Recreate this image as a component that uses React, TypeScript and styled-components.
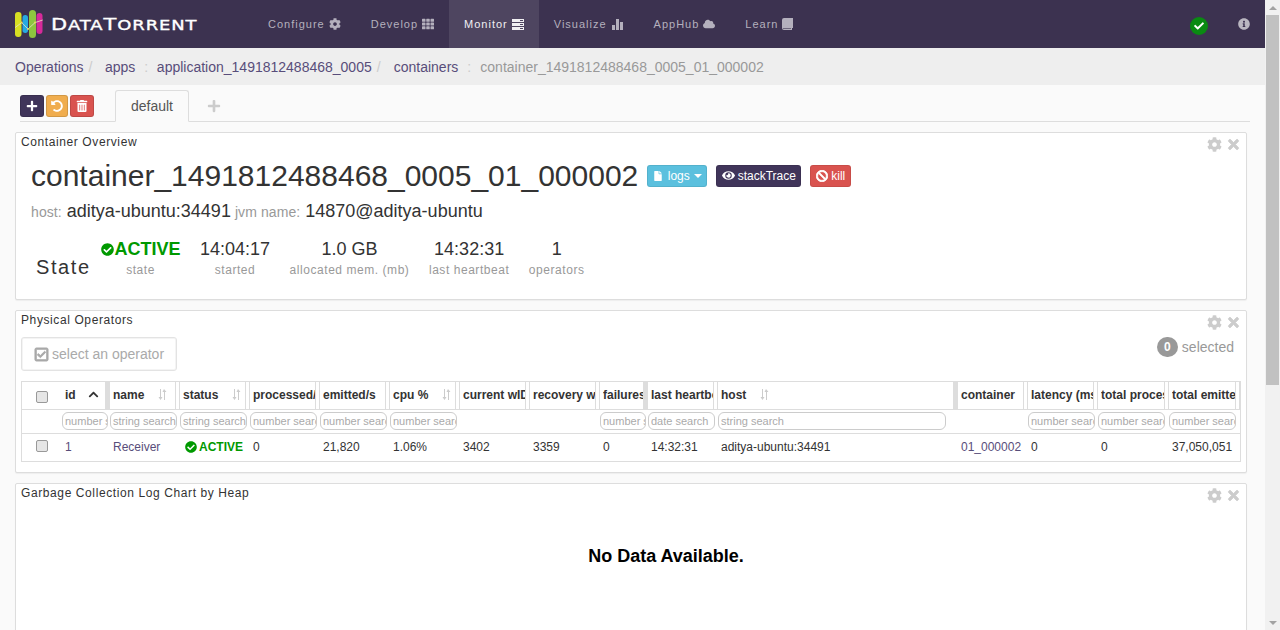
import React from "react";
import styled, { createGlobalStyle } from "styled-components";
import {
  FaCog, FaTh, FaCloud, FaInfoCircle, FaCheckCircle, FaPlus, FaUndoAlt, FaTrashAlt, FaFile,
  FaEye, FaBan, FaTimes, FaCheck, FaChevronUp, FaRegCheckSquare,
} from "react-icons/fa";

const Global = createGlobalStyle`
  html, body { margin: 0; padding: 0; height: 630px; overflow: hidden; background: #fafafa; }
  body { font-family: "Liberation Sans", Arial, sans-serif; font-size: 14px; color: #333; }
  * { box-sizing: border-box; }
`;

const Shell = styled.div`display: flex; width: 1280px; height: 630px; overflow: hidden;`;
const Main = styled.div`width: 1265px; height: 630px; overflow: hidden; flex: none;`;

const ScrollTrack = styled.div`
  width: 15px; height: 630px; background: #f1f1f1; flex: none; display: flex; flex-direction: column; align-items: center;
`;
const ScrollArrow = styled.div<{ $down?: boolean }>`
  height: 15px; flex: none; width: 100%; display: flex; align-items: center; justify-content: center;
  &::after {
    content: ""; width: 0; height: 0; border-left: 4px solid transparent; border-right: 4px solid transparent;
    ${(p) => (p.$down ? "border-top: 4px solid #a3a3a3;" : "border-bottom: 4px solid #a3a3a3;")}
  }
`;
const ScrollThumb = styled.div`width: 13px; height: 370px; background: #c1c1c1; flex: none;`;
const ScrollGap = styled.div`flex: 1;`;

const Nav = styled.nav`height: 48px; background: #3c3250; display: flex; align-items: stretch;`;
const Brand = styled.div`width: 253px; flex: none; display: flex; align-items: center; padding-left: 15px; gap: 8px;`;
const BrandText = styled.span`
  display: inline-block; font-family: "DejaVu Sans", "Liberation Sans", sans-serif; font-weight: 400; font-size: 13.7px; color: #fff;
  letter-spacing: 0.7px; white-space: nowrap; -webkit-text-stroke: .35px #fff; transform: scaleX(1.31); transform-origin: left center; margin-top: 1px;
`;
const BrandCap = styled.span`font-size: 16px;`;
const NavItem = styled.a<{ $active?: boolean }>`
  display: flex; align-items: center; gap: 4px; padding: 0 15px; font-size: 11px; letter-spacing: 1px;
  color: ${(p) => (p.$active ? "#f0eff2" : "#b4b0bd")};
  background: ${(p) => (p.$active ? "#4e4560" : "transparent")};
  white-space: nowrap;
`;
const NavRight = styled.div`margin-left: auto; display: flex; align-items: center; padding-right: 15.5px; gap: 29.5px;`;
const StatusDot = styled.span`
  width: 18px; height: 18px; border-radius: 50%; background: #0a8a12; color: #fff; display: flex; align-items: center; justify-content: center; margin-top: 3px;
`;
const InfoIcon = styled(FaInfoCircle)`color: #b9b6c0; font-size: 12px; margin-top: -1px;`;
const BarsSvg = styled.svg`margin: 0 1px;`;

const Breadcrumbs = styled.div`height: 37px; background: #eee; display: flex; align-items: center; padding-left: 15px; white-space: nowrap;`;
const Crumb = styled.a`color: #584d7a;`;
const CrumbCurrent = styled.span`color: #999;`;
const Sep = styled.span<{ $w: number; $pad: number }>`color: #ccc; width: ${(p) => p.$w}px; padding-left: ${(p) => p.$pad}px; flex: none;`;

const TabBar = styled.div`height: 32px; margin: 5px 15px 0 20px; display: flex; border-bottom: 1px solid #ddd;`;
const Tools = styled.div`display: flex; gap: 2px; width: 95px; padding-top: 5px; flex: none;`;
const ToolButton = styled.button<{ $bg: string; $w: number }>`
  width: ${(p) => p.$w}px; height: 22px; border: 1px solid rgba(0,0,0,.12); border-radius: 3px; background: ${(p) => p.$bg}; color: #fff;
  padding: 0; display: flex; align-items: center; justify-content: center; font-size: 12px;
`;
const Tab = styled.div`
  width: 74px; height: 32px; background: #fafafa; border: 1px solid #ddd; border-bottom: 1px solid #fafafa; border-radius: 3px 3px 0 0; color: #555;
  display: flex; align-items: center; justify-content: center; flex: none;
`;
const AddTab = styled.div`color: #ccc; font-size: 14px; display: flex; align-items: center; padding-left: 18px; height: 31px;`;

const Panels = styled.div`margin: 10px 18px 0 15px; display: flex; flex-direction: column; gap: 10px;`;
const Panel = styled.section<{ $h: number }>`
  height: ${(p) => p.$h}px; flex: none; background: #fff; border: 1px solid #ddd; border-radius: 2px; box-shadow: 0 1px 1px rgba(0,0,0,.05); padding: 0 5px; position: relative;
`;
const PanelTitle = styled.h3`margin: 0; padding-top: 2px; font-size: 12px; font-weight: 400; letter-spacing: .6px; line-height: 14px; color: #333;`;
const PanelTools = styled.div`position: absolute; right: 5px; top: 4px; display: flex; gap: 4px; color: #ccc; font-size: 15px; align-items: center;`;
const CloseIcon = styled(FaTimes)`font-size: 15px; stroke: currentColor; stroke-width: 25;`;

const Heading = styled.div`display: flex; align-items: center; margin: 7px 0 0 10px; height: 40px;`;
const H1 = styled.h1`margin: 0 9px 0 0; font-size: 30px; font-weight: 400; color: #333; line-height: 40px;`;
const Label = styled.button<{ $bg: string; $w: number }>`
  width: ${(p) => p.$w}px; height: 22px; margin-right: 9px; border: 1px solid rgba(0,0,0,.08); border-radius: 3px; background: ${(p) => p.$bg}; color: #fff;
  display: flex; align-items: center; justify-content: center; gap: 3px; padding: 0; font: 12px "Liberation Sans", sans-serif; white-space: nowrap;
`;
const LogsIcon = styled(FaFile)`font-size: 10px; margin-right: 2px;`;
const EyeIcon = styled(FaEye)`font-size: 13px; margin-top: -2px;`;
const BanIcon = styled(FaBan)`font-size: 12px; stroke: currentColor; stroke-width: 30;`;
const Caret = styled.span`width: 0; height: 0; border-left: 4px solid transparent; border-right: 4px solid transparent; border-top: 4px solid #fff; margin-left: 1px;`;

const HostLine = styled.div`margin: 2px 0 0 10px; height: 26px; line-height: 26px; white-space: nowrap;`;
const Muted = styled.span`color: #999; font-size: 14px; letter-spacing: .1px;`;
const Strong = styled.span`font-size: 18px; color: #333; margin-right: 4px; margin-left: 1px;`;

const Stats = styled.div`display: flex; align-items: flex-start; margin: 14px 0 0 15px; gap: 19.5px;`;
const StateWord = styled.div`font-size: 20px; letter-spacing: 1.6px; width: 45px; padding-top: 17px; line-height: 24px; color: #333; white-space: nowrap;`;
const Stat = styled.div`display: flex; flex-direction: column; align-items: center; white-space: nowrap;`;
const StatValue = styled.div`font-size: 18px; line-height: 22px; color: #333; height: 22px;`;
const StatLabel = styled.div`font-size: 12px; letter-spacing: .55px; color: #999; margin-top: 3px; line-height: 14px;`;
const Active = styled.span<{ $big?: boolean }>`
  display: inline-flex; align-items: center; gap: ${(p) => (p.$big ? 1 : 2)}px; color: #090; font-weight: 700; font-size: ${(p) => (p.$big ? 18 : 12)}px;
  ${(p) => (p.$big ? "" : "margin: 3px 0 0 2px;")}
`;
const ActiveIcon = styled(FaCheckCircle)<{ $s: number }>`font-size: ${(p) => p.$s}px; color: #090;`;

const OpRow = styled.div`display: flex; justify-content: space-between; margin-top: 10px; height: 34px;`;
const SelectBtn = styled.button`
  width: 156px; height: 34px; border: 1px solid #e3e3e3; border-radius: 3px; background: #fff; color: #aaa; font: 14px "Liberation Sans", sans-serif;
  display: flex; align-items: center; gap: 3px; padding: 0 0 0 12px; box-shadow: 0 0 0 1px #f4f4f4 inset;
`;
const SelectIcon = styled(FaRegCheckSquare)`font-size: 15px; stroke: currentColor; stroke-width: 30;`;
const Selected = styled.div`display: flex; align-items: center; gap: 4px; color: #999; height: 20px; margin: 0 7px 0 0;`;
const Badge = styled.span`background: #999; color: #fff; border-radius: 10px; width: 21px; height: 20px; font-size: 12px; font-weight: 700; display: flex; align-items: center; justify-content: center;`;

const Table = styled.table`
  margin-top: 10px; width: 1220px; table-layout: fixed; border-collapse: separate; border-spacing: 0; border: 1px solid #ddd; font-size: 12px; color: #333;
`;
const Col = styled.col<{ $w: number }>`width: ${(p) => p.$w}px;`;
const Th = styled.th`
  height: 28px; padding: 0 5px 2px 3px; text-align: left; font-weight: 700; white-space: nowrap; overflow: hidden; position: relative; border-bottom: 1px solid #ddd;
`;
const ThInner = styled.div`display: flex; align-items: center; gap: 13px; overflow: hidden;`;
const Handle = styled.span<{ $solid?: boolean }>`
  position: absolute; top: 0; bottom: 0; right: 0; width: 5px;
  ${(p) => (p.$solid ? "background: #ddd;" : "border-left: 1px solid #ddd; border-right: 1px solid #ddd;")}
`;
const FilterTd = styled.td`
  height: 24px; padding: 2px 0 0 0; border-bottom: 1px solid #ddd; vertical-align: top;
`;
const FilterInput = styled.input<{ $w: number }>`
  display: block; width: ${(p) => p.$w}px; height: 18px; border: 1px solid #ccc; border-radius: 6px; padding: 0 0 0 2px; font: 11px "Liberation Sans", sans-serif; outline: none; background: #fff;
  &::placeholder { color: #aaa; opacity: 1; }
`;
const Td = styled.td`height: 27px; padding: 0 3px 2px; white-space: nowrap; overflow: hidden; vertical-align: middle;`;
const CheckCell = styled.td`height: 27px; padding: 0 0 4px 14px; vertical-align: middle;`;
const CheckHead = styled.th`height: 28px; padding: 2px 0 0 14px; border-bottom: 1px solid #ddd; vertical-align: middle;`;
const Check = styled.input`
  appearance: none; display: block; width: 12px; height: 12px; margin: 0; border: 1px solid #999; border-radius: 2px; background: #e6e6e6;
`;
const Link = styled.a`color: #584d7a;`;
const SortIcon = styled.svg`flex: none; color: #ccc; margin-left: 1px;`;
const UpIcon = styled(FaChevronUp)`flex: none; font-size: 11px; color: #333; margin-left: -1px;`;
const NoData = styled.div`margin: 45px 0 0 70px; text-align: center; font-size: 18px; font-weight: 700; color: #000; line-height: 22px; width: 1150px;`;

const Logo = () => (
  <svg width="28" height="29" viewBox="0 0 28 29">
    <rect x="0" y="2" width="6.500" height="25" rx="3" fill="#d7df23" />
    <rect x="7.500" y="5" width="5.500" height="18" rx="2.700" fill="#27aae1" />
    <rect x="14" y="0" width="7" height="28" rx="3.500" fill="#8dc63f" />
    <rect x="21.500" y="3" width="6" height="21" rx="3" fill="#d62a9a" />
    <polyline points="0,17.600 6.700,12.600 13,19 20,12.600 27.700,10" fill="none" stroke="#e8e4c8" strokeWidth=".8" />
    <circle cx="6.700" cy="12.600" r="1" fill="#f0d060" />
    <circle cx="13" cy="19" r="1" fill="#f0d060" />
    <circle cx="20" cy="12.600" r="1" fill="#f0d060" />
  </svg>
);

const Sort = () => (
  <SortIcon width="9" height="11" viewBox="0 0 9 11">
    <path d="M2 0h1v8h1.500L2.500 11 .5 8H2zM6 0l2.500 3H7v8H6V3H4.500z" fill="currentColor" />
  </SortIcon>
);
const StatsIcon = () => (
  <BarsSvg width="11" height="11" viewBox="0 0 11 11"><path d="M0 6h3v5H0zM4 0h3v11H4zM8 3h3v8H8z" fill="currentColor" /></BarsSvg>
);
const ServerIcon = () => (
  <svg width="12" height="11" viewBox="0 0 12 11"><path d="M0 0h12v3H0zM0 4h12v3H0zM0 8h12v3H0z" fill="currentColor" /><path d="M8 1h3v1H8zM8 5h3v1H8zM8 9h3v1H8z" fill="#4e4560" /></svg>
);
const BookIcon = () => (
  <svg width="11" height="12" viewBox="0 0 11 12"><path d="M2 0h9v10H10v2H2a2 2 0 0 1-2-2V2a2 2 0 0 1 2-2z" fill="currentColor" /><path d="M1 10.500h8" stroke="#3c3250" strokeWidth=".6" /></svg>
);

type Column = { key: string; w: number; sort?: boolean; up?: boolean; solid?: boolean; ph?: string; iw?: number; val?: React.ReactNode };
const columns: Column[] = [
  { key: "id", w: 48, up: true, solid: true, ph: "number search", iw: 46, val: <Link>1</Link> },
  { key: "name", w: 70, sort: true, ph: "string search", iw: 67, val: <Link>Receiver</Link> },
  { key: "status", w: 70, sort: true, ph: "string search", iw: 67, val: <Active><ActiveIcon $s={12} />ACTIVE</Active> },
  { key: "processed/s", w: 70, ph: "number search", iw: 67, val: "0" },
  { key: "emitted/s", w: 70, ph: "number search", iw: 67, val: "21,820" },
  { key: "cpu %", w: 70, sort: true, ph: "number search", iw: 67, val: "1.06%" },
  { key: "current wID", w: 70, val: "3402" },
  { key: "recovery wID", w: 70, val: "3359" },
  { key: "failures", w: 48, solid: true, ph: "number search", iw: 46, val: "0" },
  { key: "last heartbeat", w: 70, ph: "date search", iw: 67, val: "14:32:31" },
  { key: "host", w: 240, sort: true, solid: true, ph: "string search", iw: 228, val: "aditya-ubuntu:34491" },
  { key: "container", w: 70, val: <Link>01_000002</Link> },
  { key: "latency (ms)", w: 70, ph: "number search", iw: 67, val: "0" },
  { key: "total processed", w: 71, ph: "number search", iw: 67, val: "0" },
  { key: "total emitted", w: 71, ph: "number search", iw: 67, val: "37,050,051" },
];

const HeadCell = ({ c }: { c: Column }) => (
  <Th>
    <ThInner>
      <span>{c.key}</span>
      {c.up && <UpIcon />}
      {c.sort && <Sort />}
    </ThInner>
    <Handle $solid={c.solid} />
  </Th>
);

const PanelActions = () => (
  <PanelTools>
    <FaCog />
    <CloseIcon />
  </PanelTools>
);

export default function App() {
  return (
    <Shell>
      <Global />
      <Main>
        <Nav>
          <Brand>
            <Logo />
            <BrandText><BrandCap>D</BrandCap>ATA<BrandCap>T</BrandCap>ORRENT</BrandText>
          </Brand>
          <NavItem>Configure <FaCog size={12} /></NavItem>
          <NavItem>Develop <FaTh size={12} /></NavItem>
          <NavItem $active>Monitor <ServerIcon /></NavItem>
          <NavItem>Visualize <StatsIcon /></NavItem>
          <NavItem>AppHub <FaCloud size={12} /></NavItem>
          <NavItem>Learn <BookIcon /></NavItem>
          <NavRight>
            <StatusDot><FaCheck size={10} /></StatusDot>
            <InfoIcon />
          </NavRight>
        </Nav>
        <Breadcrumbs>
          <Crumb>Operations</Crumb><Sep $w={21.500} $pad={5}>/</Sep>
          <Crumb>apps</Crumb><Sep $w={21.500} $pad={9}>:</Sep>
          <Crumb>application_1491812488468_0005</Crumb><Sep $w={22} $pad={5}>/</Sep>
          <Crumb>containers</Crumb><Sep $w={22} $pad={9}>:</Sep>
          <CrumbCurrent>container_1491812488468_0005_01_000002</CrumbCurrent>
        </Breadcrumbs>
        <TabBar>
          <Tools>
            <ToolButton $bg="#40355a" $w={24}><FaPlus /></ToolButton>
            <ToolButton $bg="#f0ad4e" $w={22}><FaUndoAlt /></ToolButton>
            <ToolButton $bg="#d9534f" $w={24}><FaTrashAlt /></ToolButton>
          </Tools>
          <Tab>default</Tab>
          <AddTab><FaPlus /></AddTab>
        </TabBar>
        <Panels>
          <Panel $h={168}>
            <PanelTitle>Container Overview</PanelTitle>
            <PanelActions />
            <Heading>
              <H1>container_1491812488468_0005_01_000002</H1>
              <Label $bg="#5bc0de" $w={60}><LogsIcon />logs<Caret /></Label>
              <Label $bg="#40355a" $w={85}><EyeIcon />stackTrace</Label>
              <Label $bg="#d9534f" $w={41}><BanIcon />kill</Label>
            </Heading>
            <HostLine>
              <Muted>host:</Muted> <Strong>aditya-ubuntu:34491</Strong>
              <Muted>jvm name:</Muted> <Strong>14870@aditya-ubuntu</Strong>
            </HostLine>
            <Stats>
              <StateWord>State</StateWord>
              <Stat><StatValue><Active $big><ActiveIcon $s={13} />ACTIVE</Active></StatValue><StatLabel>state</StatLabel></Stat>
              <Stat><StatValue>14:04:17</StatValue><StatLabel>started</StatLabel></Stat>
              <Stat><StatValue>1.0 GB</StatValue><StatLabel>allocated mem. (mb)</StatLabel></Stat>
              <Stat><StatValue>14:32:31</StatValue><StatLabel>last heartbeat</StatLabel></Stat>
              <Stat><StatValue>1</StatValue><StatLabel>operators</StatLabel></Stat>
            </Stats>
          </Panel>
          <Panel $h={163}>
            <PanelTitle>Physical Operators</PanelTitle>
            <PanelActions />
            <OpRow>
              <SelectBtn><SelectIcon />select an operator</SelectBtn>
              <Selected><Badge>0</Badge>selected</Selected>
            </OpRow>
            <Table>
              <colgroup>
                <Col $w={40} />
                {columns.map((c) => <Col key={c.key} $w={c.w} />)}
              </colgroup>
              <thead>
                <tr>
                  <CheckHead><Check type="checkbox" readOnly /></CheckHead>
                  {columns.map((c) => <HeadCell key={c.key} c={c} />)}
                </tr>
                <tr>
                  <FilterTd />
                  {columns.map((c) => (
                    <FilterTd key={c.key}>{c.ph && <FilterInput $w={c.iw ?? 67} placeholder={c.ph} readOnly />}</FilterTd>
                  ))}
                </tr>
              </thead>
              <tbody>
                <tr>
                  <CheckCell><Check type="checkbox" readOnly /></CheckCell>
                  {columns.map((c) => <Td key={c.key}>{c.val}</Td>)}
                </tr>
              </tbody>
            </Table>
          </Panel>
          <Panel $h={200}>
            <PanelTitle>Garbage Collection Log Chart by Heap</PanelTitle>
            <PanelActions />
            <NoData>No Data Available.</NoData>
          </Panel>
        </Panels>
      </Main>
      <ScrollTrack>
        <ScrollArrow />
        <ScrollThumb />
        <ScrollGap />
        <ScrollArrow $down />
      </ScrollTrack>
    </Shell>
  );
}
